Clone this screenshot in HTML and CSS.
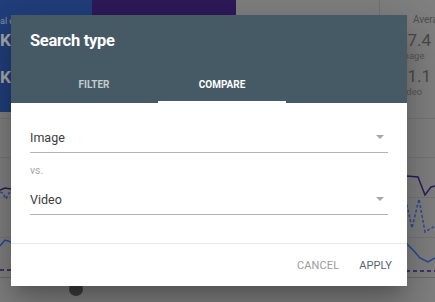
FILE: index.html
```html
<!DOCTYPE html>
<html>
<head>
<meta charset="utf-8">
<link rel="stylesheet" href="styles.css">
</head>
<body>
<div class="page">
  <div class="cards">
    <div class="card card-blue">
      <div class="card-label">al clicks</div>
      <div class="card-value">K</div>
      <div class="card-value second">K</div>
    </div>
    <div class="card card-purple"></div>
    <div class="card card-white"></div>
    <div class="card card-side">
      <div class="side-head"><span class="box"></span><span>Average position</span></div>
      <div class="side-value">27.4</div>
      <div class="side-label">Image</div>
      <div class="side-value">31.1</div>
      <div class="side-label">Video</div>
    </div>
  </div>
  <svg class="chart" width="435" height="190" viewBox="0 112 435 190">
    <g stroke="#767676" stroke-width="1">
      <line x1="0" y1="118.5" x2="435" y2="118.5"/>
      <line x1="0" y1="157.5" x2="435" y2="157.5"/>
      <line x1="0" y1="197.5" x2="435" y2="197.5"/>
      <line x1="0" y1="237.5" x2="435" y2="237.5"/>
    </g>
    <line x1="0" y1="277.5" x2="435" y2="277.5" stroke="#6a6a6a" stroke-width="1"/>
    <polyline fill="none" stroke="#2f1b5c" stroke-width="1.5" points="0,190 5,188 11,189 100,186 300,184 407,176 418,177 425,195 431,187 435,186"/>
    <polyline fill="none" stroke="#2c4c96" stroke-width="1.5" stroke-dasharray="3,2" points="0,192 3,193 6,199 9,193 11,192 300,210 407,205 412,228 419,199 425,232 435,226"/>
    <polyline fill="none" stroke="#27489a" stroke-width="1.5" points="0,246 5,240 11,242 300,240 407,244 414,251 420,258 428,262 435,258"/>
    <polyline fill="none" stroke="#2f1b5c" stroke-width="1.5" stroke-dasharray="4,3" points="0,270 435,271"/>
    <circle cx="76" cy="289" r="7" fill="#3c3c3c"/>
  </svg>

  <div class="dialog">
    <div class="dialog-head">
      <div class="dialog-title">Search type</div>
      <div class="tabs">
        <div class="tab">FILTER</div>
        <div class="tab active">COMPARE</div>
      </div>
    </div>
    <div class="dialog-body">
      <div class="select">
        <span>Image</span>
        <span class="arrow"></span>
      </div>
      <div class="vs">vs.</div>
      <div class="select">
        <span>Video</span>
        <span class="arrow"></span>
      </div>
    </div>
    <div class="dialog-foot">
      <button class="btn cancel">CANCEL</button>
      <button class="btn apply">APPLY</button>
    </div>
  </div>
</div>
</body>
</html>
```
FILE: styles.css
```css
html, body {
  margin: 0;
  padding: 0;
}
body {
  width: 435px;
  height: 302px;
  overflow: hidden;
  font-family: Roboto, "Liberation Sans", sans-serif;
  background: #808080;
}
.page {
  position: relative;
  width: 435px;
  height: 302px;
  display: flex;
  flex-direction: column;
  background: #808080;
}
.cards {
  display: flex;
  height: 112px;
  flex: none;
}
.card {
  height: 112px;
  box-sizing: border-box;
  flex: none;
}
.card-blue {
  width: 92px;
  background: #213f7b;
  color: #a9a9ad;
  padding-top: 15px;
}
.card-label {
  font-size: 9px;
  line-height: 12px;
  color: #8d93a6;
}
.card-value {
  font-size: 17px;
  font-weight: 700;
  line-height: 20px;
  margin-top: 3px;
}
.card-value.second {
  margin-top: 17px;
}
.card-purple {
  width: 144px;
  height: 15px;
  background: #2e1a59;
}
.card-white {
  width: 143px;
  height: 15px;
  background: #808080;
}
.card-side {
  flex: 1 1 0;
  min-width: 0;
  overflow: hidden;
  border-left: 1px solid #737373;
  padding-left: 18px;
  padding-top: 14px;
  color: #4f4f4f;
  white-space: nowrap;
}
.side-head {
  display: flex;
  align-items: center;
  gap: 6px;
  font-size: 10px;
  line-height: 12px;
  color: #505050;
}
.box {
  width: 9px;
  height: 9px;
  flex: none;
  border: 1px solid #4a4a4a;
  box-sizing: border-box;
}
.side-value {
  font-size: 17px;
  line-height: 20px;
  margin-top: 4px;
  color: #4a4a4a;
}
.side-label {
  font-size: 9.5px;
  line-height: 12px;
  color: #555;
}
.chart {
  display: block;
  flex: none;
}

.dialog {
  position: absolute;
  left: 11px;
  top: 15px;
  width: 396px;
  height: 271px;
  background: #fff;
  display: flex;
  flex-direction: column;
  box-shadow: 0 11px 15px -7px rgba(0,0,0,.2), 0 24px 38px 3px rgba(0,0,0,.14), 0 9px 46px 8px rgba(0,0,0,.12);
}
.dialog-head {
  background: #465a65;
  height: 88px;
  box-sizing: border-box;
  padding-top: 15px;
  display: flex;
  flex-direction: column;
}
.dialog-title {
  color: #fff;
  font-size: 16.5px;
  font-weight: 700;
  line-height: 22px;
  padding-left: 19px;
  letter-spacing: -0.3px;
}
.tabs {
  display: flex;
  margin-top: auto;
  padding-left: 19px;
}
.tab {
  width: 128px;
  height: 39px;
  box-sizing: border-box;
  border-bottom: 2px solid transparent;
  color: #c4cbcf;
  font-size: 10px;
  font-weight: 700;
  display: flex;
  align-items: center;
  justify-content: center;
  padding-top: 3px;
}
.tab.active {
  color: #fff;
  border-bottom-color: #fff;
}
.dialog-body {
  padding: 24px 19px 0 19px;
  flex: 1;
  border-bottom: 1px solid #e8e8e8;
}
.select {
  display: flex;
  align-items: center;
  justify-content: space-between;
  height: 20px;
  padding-bottom: 5px;
  border-bottom: 1px solid #b3b3b3;
  font-size: 12.5px;
  color: #3c3c3c;
}
.arrow {
  width: 0;
  height: 0;
  border-left: 4px solid transparent;
  border-right: 4px solid transparent;
  border-top: 4px solid #a6a6a6;
  margin-right: 4px;
}
.vs {
  font-size: 10.5px;
  color: #a8a8a8;
  line-height: 16px;
  margin-top: 10px;
  margin-bottom: 10px;
}
.dialog-foot {
  height: 42px;
  flex: none;
  display: flex;
  align-items: center;
  justify-content: flex-end;
  gap: 20px;
  padding-right: 15px;
}
.btn {
  background: none;
  border: none;
  padding: 0;
  font-family: Roboto, "Liberation Sans", sans-serif;
  font-size: 11px;
  letter-spacing: 0.1px;
}
.cancel {
  color: #9a9a9a;
}
.apply {
  color: #55656e;
}
```
